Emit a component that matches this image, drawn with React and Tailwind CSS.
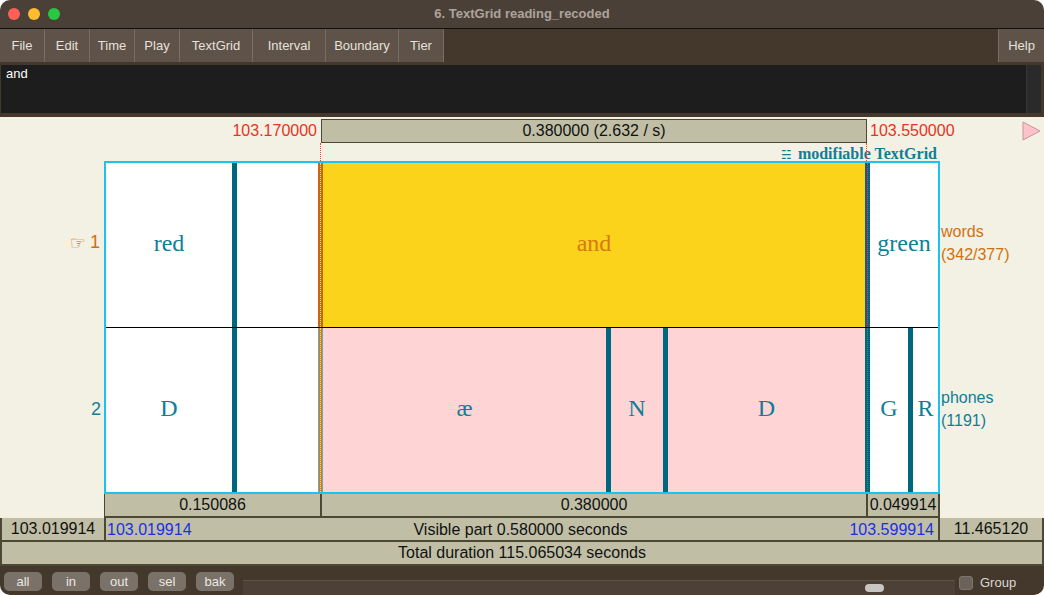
import React from 'react';

const menus = [
    { label: 'File', w: 'w-[45px]' },
    { label: 'Edit', w: 'w-[45px]' },
    { label: 'Time', w: 'w-[45px]' },
    { label: 'Play', w: 'w-[45px]' },
    { label: 'TextGrid', w: 'w-[73px]' },
    { label: 'Interval', w: 'w-[73px]' },
    { label: 'Boundary', w: 'w-[73px]' },
    { label: 'Tier', w: 'w-[45px]' },
];

// tier contents, left to right; b = boundary kind
const words = [
    { w: 'w-[126px]', t: 'red' },
    { b: 'plain' },
    { w: 'w-[81px]' },
    { b: 'selStart' },
    { w: 'w-[542px]', t: 'and', bg: 'bg-[#fcd31b]', c: 'text-[#d67a0f]' },
    { b: 'selEnd' },
    { w: 'w-[68px]', t: 'green' },
];

const phones = [
    { w: 'w-[126px]', t: 'D' },
    { b: 'plain' },
    { w: 'w-[81px]' },
    { b: 'selStart2' },
    { w: 'w-[283px]', t: 'æ', bg: 'bg-[#ffd4d4]' },
    { b: 'plain' },
    { w: 'w-[52px]', t: 'N', bg: 'bg-[#ffd4d4]' },
    { b: 'plain' },
    { w: 'w-[197px]', t: 'D', bg: 'bg-[#ffd4d4]' },
    { b: 'selEnd' },
    { w: 'w-[38px]', t: 'G' },
    { b: 'plain' },
    { w: 'w-[25px]', t: 'R' },
];

function Boundary({ kind }) {
    if (kind === 'selStart') {
        return (
            <div className="w-[5px] shrink-0 h-full bg-[#cc6614] flex justify-center">
                <div className="h-full border-l border-dotted border-[#ffe54a]" />
            </div>
        );
    }
    if (kind === 'selStart2') {
        return (
            <div className="w-[5px] shrink-0 h-full bg-[#d27a22] border-x border-[#5fa9c9] flex justify-center">
                <div className="h-full border-l border-dotted border-[#ffe54a]" />
            </div>
        );
    }
    if (kind === 'selEnd') {
        return (
            <div className="w-[5px] shrink-0 h-full bg-[#00677f] flex justify-center">
                <div className="h-full border-l border-dotted border-[#e0403a]" />
            </div>
        );
    }
    return <div className="w-[5px] shrink-0 h-full bg-[#00677f]" />;
}

function Tier({ items, className }) {
    return (
        <div className={`flex ${className}`}>
            {items.map((it, i) =>
                it.b ? (
                    <Boundary key={i} kind={it.b} />
                ) : (
                    <div
                        key={i}
                        className={`${it.w} shrink-0 h-full flex items-center justify-center pb-[4px] ${it.bg || 'bg-white'} ${it.c || 'text-[#0f7e97]'} font-['Liberation_Serif',serif] text-[24px]`}
                    >
                        {it.t}
                    </div>
                )
            )}
        </div>
    );
}

export default function App() {
    return (
        <div className="w-[1044px] h-[595px] rounded-[10px] overflow-hidden flex flex-col bg-[#f2f1e4] font-['Liberation_Sans',Arial,sans-serif]">
            {/* Title bar */}
            <div className="h-[29px] shrink-0 bg-[#4b4038] border-b border-[#111] grid grid-cols-[1fr_auto_1fr] items-center">
                <div className="flex gap-[8px] pl-[8px]">
                    <div className="w-[12px] h-[12px] rounded-full bg-[#fe5f57]" />
                    <div className="w-[12px] h-[12px] rounded-full bg-[#febc2e]" />
                    <div className="w-[12px] h-[12px] rounded-full bg-[#28c840]" />
                </div>
                <div className="text-[13px] font-bold text-[#aca49c]">6. TextGrid reading_recoded</div>
                <div />
            </div>

            {/* Menu bar */}
            <div className="h-[34px] shrink-0 bg-[#44372c] flex items-start">
                {menus.map((m) => (
                    <div
                        key={m.label}
                        className={`${m.w} h-[33px] bg-[#5e5249] border-r border-[#7a6e64] flex items-center justify-center text-[13px] text-[#e6e1dc]`}
                    >
                        {m.label}
                    </div>
                ))}
                <div className="ml-auto w-[46px] h-[33px] bg-[#5e5249] border-l border-[#7a6e64] flex items-center justify-center text-[13px] text-[#e6e1dc]">
                    Help
                </div>
            </div>

            {/* Text field */}
            <div className="h-[54px] shrink-0 bg-[#44372c] pt-[2px] pb-[4px] pl-[1px] pr-[3px] flex">
                <div className="flex-1 bg-[#1d1d1d] px-[5px] pt-[1px] text-[13px] leading-[16px] text-white">and</div>
                <div className="w-[15px] bg-[#2a2a2a] border-l border-[#363636]" />
            </div>

            {/* Editor area */}
            <div className="flex-1 flex flex-col pt-[2px]">
                {/* selection times */}
                <div className="h-[24px] flex items-center text-[16px]">
                    <div className="w-[321px] pr-[4px] text-right text-[#e8341c]">103.170000</div>
                    <div className="w-[546px] h-[24px] border border-[#4c4836] bg-[#c0bfa6] flex items-center justify-center text-[#111]">
                        0.380000 (2.632 / s)
                    </div>
                    <div className="pl-[3px] text-[#e8341c]">103.550000</div>
                    <svg className="ml-auto mr-[3px]" width="19" height="20" viewBox="0 0 19 20">
                        <polygon points="1,1 18,10 1,19" fill="#ffc2ca" stroke="#c8949a" strokeWidth="1" />
                    </svg>
                </div>

                {/* modifiable label */}
                <div className="relative h-[18px] w-[940px] pt-[3px] pr-[3px] text-right leading-[16px] text-[16px] font-bold text-[#0f7e97] font-['Liberation_Serif',serif]">
                    <span className="font-['DejaVu_Sans',sans-serif] text-[12px] font-normal mr-[6px]">☵</span>
                    modifiable TextGrid
                    <div className="absolute left-[320px] top-0 h-full border-l border-dotted border-[#e04a3a]" />
                    <div className="absolute left-[866px] top-0 h-full border-l border-dotted border-[#e04a3a]" />
                </div>

                {/* tiers */}
                <div className="flex h-[333px]">
                    <div className="w-[104px] flex flex-col text-[18px]">
                        <div className="h-[165px] flex items-center justify-end pr-[4px] pb-[2px] text-[#d2700e]">
                            <span className="font-['DejaVu_Sans',sans-serif] text-[18px] mr-[4px]">☞</span>1
                        </div>
                        <div className="flex-1 flex items-center justify-end pr-[3px] pb-[2px] text-[#0f7e97]">2</div>
                    </div>
                    <div className="w-[836px] h-[333px] border-2 border-[#19c5f0] flex flex-col">
                        <Tier items={words} className="h-[165px] border-b border-black" />
                        <Tier items={phones} className="h-[164px]" />
                    </div>
                    <div className="flex-1 flex flex-col pl-[1px] text-[16px] leading-[23px]">
                        <div className="h-[165px] flex flex-col justify-center pb-[2px] text-[#d2700e]">
                            <div>words</div>
                            <div>(342/377)</div>
                        </div>
                        <div className="flex-1 flex flex-col justify-center pb-[2px] text-[#0f7e97]">
                            <div>phones</div>
                            <div>(1191)</div>
                        </div>
                    </div>
                </div>

                {/* interval durations */}
                <div className="ml-[104px] w-[836px] h-[24px] flex gap-[2px] pl-[1px] pr-[2px] pb-[2px] bg-[#4c4836] text-[16px] text-[#111]">
                    <div className="w-[215px] bg-[#c0bfa6] flex items-center justify-center">0.150086</div>
                    <div className="w-[544px] bg-[#c0bfa6] flex items-center justify-center">0.380000</div>
                    <div className="w-[70px] bg-[#c0bfa6] flex items-center justify-center">0.049914</div>
                </div>

                {/* visible part */}
                <div className="h-[24px] flex gap-[2px] px-[2px] pb-[2px] bg-[#4c4836] text-[16px] text-[#111]">
                    <div className="w-[102px] bg-[#c0bfa6] flex items-center justify-center">103.019914</div>
                    <div className="w-[832px] bg-[#c0bfa6] grid grid-cols-[1fr_auto_1fr] items-center pl-[1px] pr-[4px]">
                        <span className="justify-self-start text-[#1b30e4]">103.019914</span>
                        <span>Visible part 0.580000 seconds</span>
                        <span className="justify-self-end text-[#1b30e4]">103.599914</span>
                    </div>
                    <div className="flex-1 bg-[#c0bfa6] flex items-center justify-center">11.465120</div>
                </div>

                {/* total */}
                <div className="h-[24px] flex px-[2px] pb-[2px] bg-[#4c4836] text-[16px] text-[#111]">
                    <div className="flex-1 bg-[#c0bfa6] flex items-center justify-center">Total duration 115.065034 seconds</div>
                </div>
            </div>

            {/* Bottom bar */}
            <div className="h-[29px] shrink-0 bg-[#44372c] flex items-start">
                <div className="flex gap-[10px] pl-[4px] pt-[6px]">
                    {['all', 'in', 'out', 'sel', 'bak'].map((b) => (
                        <div
                            key={b}
                            className="w-[38px] h-[19px] rounded-[5px] bg-[#7a7169] flex items-center justify-center text-[13px] text-[#ece8e3]"
                        >
                            {b}
                        </div>
                    ))}
                </div>
                <div className="relative ml-[9px] mt-[14px] w-[712px] h-[15px] bg-[#4d4037] border-t border-[#5e5248]">
                    <div className="absolute left-[622px] top-[3px] w-[19px] h-[8px] rounded-full bg-[#c9c5c1]" />
                </div>
                <div className="ml-[4px] mt-[10px] w-[14px] h-[14px] rounded-[3px] bg-[#6b635b] border border-[#7d756d]" />
                <div className="ml-[7px] mt-[9px] text-[13px] leading-[16px] text-[#dcd7d2]">Group</div>
            </div>
        </div>
    );
}
